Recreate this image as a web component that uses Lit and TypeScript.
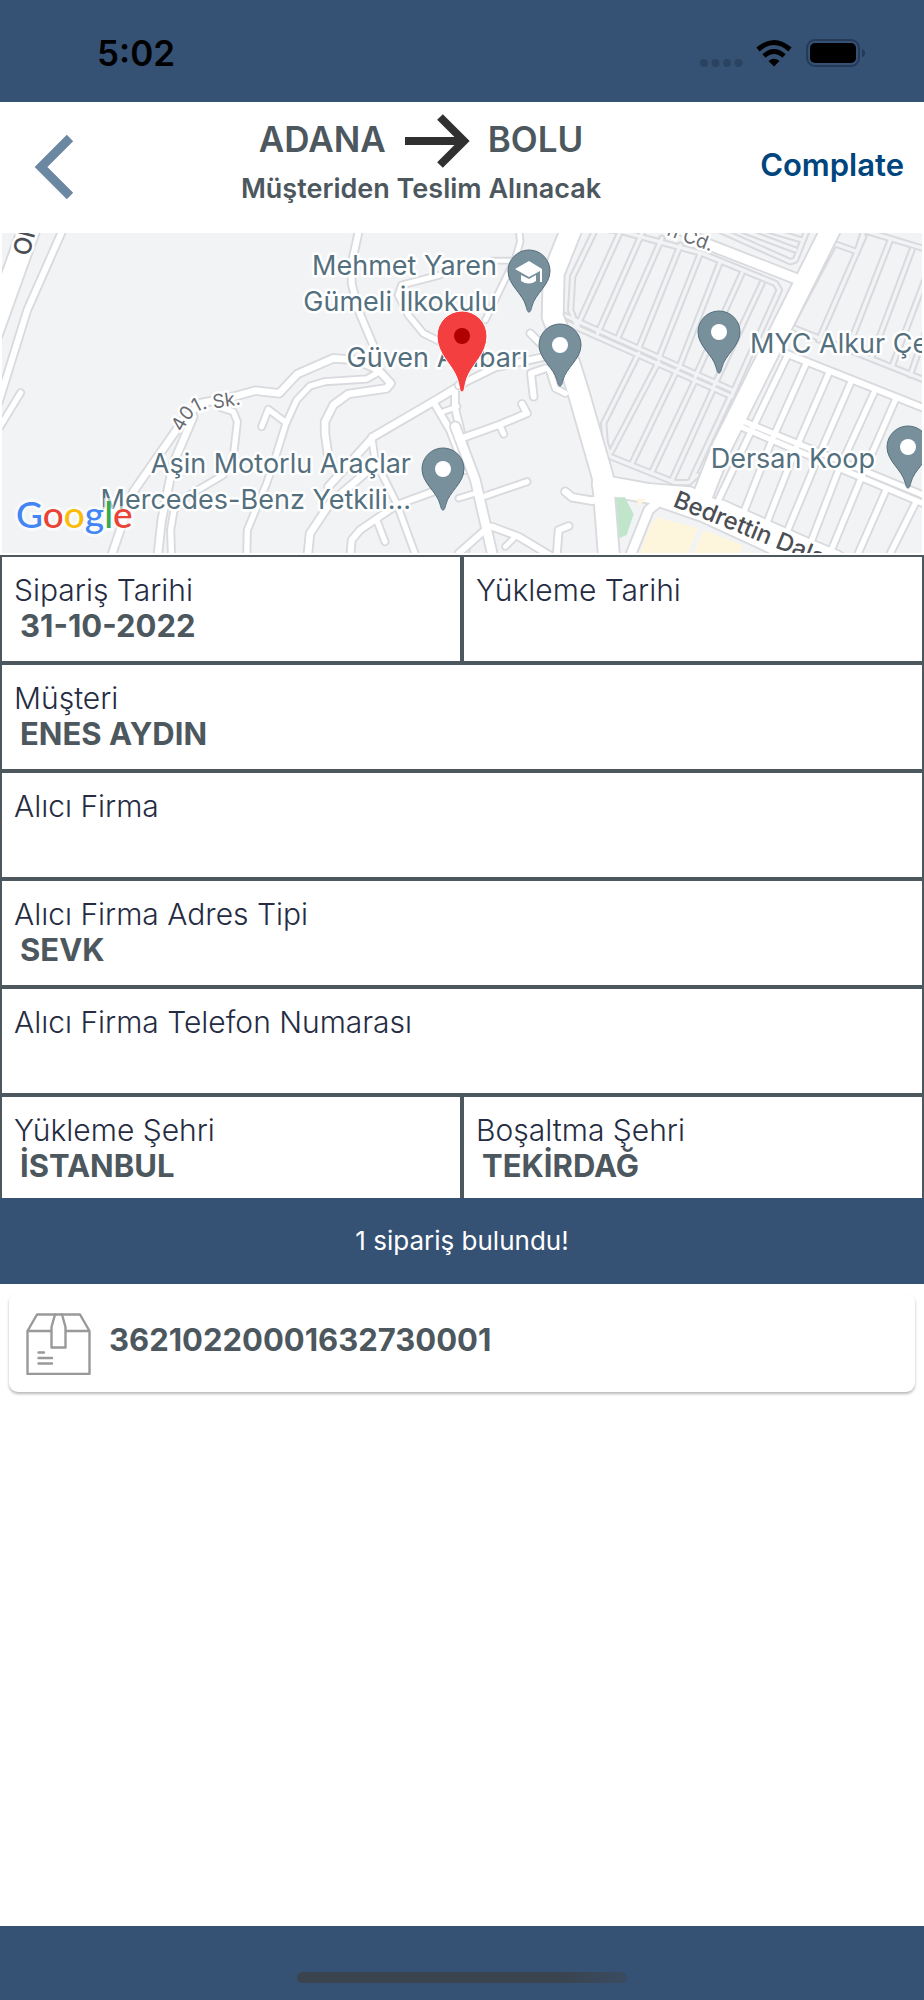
import { LitElement, html, svg, css } from "lit";
import { customElement, property } from "lit/decorators.js";

type Road = [path: string, width: number];

// Street geometry is kept in thirds of a pixel; the east half has its own origin.
const WEST_ROADS: Road[] = [
  ["M90 -10L-25 310", 62],
  ["M190 -5L82 240L-5 520", 18],
  ["M62 488L0 590", 16],
  ["M330 990L400 785L550 570L600 520L700 500L765 482L838 490L892 432L1000 385L1070 390L1135 420L1172 460L1160 475L1045 492L1000 525L975 575V610L985 680", 20],
  ["M1078 -5L1055 100V160L1075 240L1130 370L1130 425", 18],
  ["M472 990L485 870L520 700L580 560", 20],
  ["M660 532L700 545L712 575L700 680L670 735L560 800L522 840L512 900L515 990", 16],
  ["M740 990L742 900L800 760L830 670L858 580L890 510L930 468L975 455L1100 447L1130 430", 16],
  ["M785 590L805 538L858 578", 16],
  ["M922 990L930 910L990 820L1130 700", 20],
  ["M985 770L1120 620L1300 515L1386 463", 20],
  ["M1115 620L1125 690L1190 820L1252 990", 16],
  ["M1300 515L1350 600L1396 720", 18],
  ["M1365 480V535L1396 660", 18],
  ["M1330 545L1372 530", 14],
  ["M1050 990L1055 930L1080 900L1190 825L1300 785", 18],
  ["M1130 870L1155 935", 16],
  ["M1320 135L1205 165L1195 195L1225 255L1270 310L1340 345", 16],
  ["M1370 990L1400 960", 14],
];

const EAST_ROADS: Road[] = [
  ["M170 -5L175 35L160 85L70 270", 14],
  ["M90 92H150", 12],
  ["M-10 466L100 412L250 380", 18],
  ["M205 310L240 345", 18],
  ["M215 500L207 430L250 415", 18],
  ["M262 420L280 475L310 490", 16],
  ["M-10 628L110 585L195 550L180 522", 18],
  ["M115 590L125 612", 16],
  ["M70 798L195 755", 16],
  ["M-10 805L40 790", 14],
  ["M-20 590L40 750L95 990", 26],
  ["M310 785L330 802L390 812L415 808", 20],
  ["M283 990L290 900L320 888", 18],
  ["M90 890L170 920L270 980", 18],
  ["M-10 970L80 890", 18],
  ["M130 950L155 925", 14],
  ["M970 370L1400 540", 18],
  ["M975 380L850 640L760 830", 16],
  ["M1035 395L930 630L840 860", 16],
  ["M1100 430L1000 660L910 890", 16],
  ["M1165 460L1065 690L965 930", 16],
  ["M1235 490L1130 720L1030 980", 16],
  ["M1300 510L1195 750L1100 980", 16],
  ["M1270 785L1180 990", 16],
  ["M1360 820L1270 1000", 16],
  ["M835 570L1400 802", 16],
  ["M835 590L1400 828", 16],
  ["M780 820L1160 990", 18],
  ["M660 0L730 40L1000 145", 28],
  ["M335 -20L275 130L272 260L300 330L350 490L422 740L442 990", 60],
  ["M1115 -20L980 250L860 490L780 650L725 790", 56],
  ["M420 765L560 790L680 800L800 860L1120 990", 56],
  ["M500 990L560 840L590 815L720 860L980 980", 26],
];

const ALLEYS: string[] = [
  "M395 10L332 140L326 240L345 290",
  "M380 -10L480 5L720 70L940 160L952 180L810 495",
  "M475 5L345 290",
  "M540 10L407 310",
  "M600 25L467 325",
  "M655 45L530 355",
  "M715 70L590 385",
  "M775 95L650 415",
  "M840 130L700 440",
  "M900 160L755 470",
  "M305 255L810 480",
  "M305 275L810 500",
  "M530 370L425 580L430 640L445 680L640 758H680L705 735",
  "M590 395L448 665",
  "M645 420L510 700",
  "M700 450L570 725",
  "M755 475L630 750",
  "M805 500L690 745",
  "M750 -10L985 95L1000 90L1040 -10",
  "M800 -15L1000 60",
  "M850 -20L1020 30",
  "M1100 35L1185 65L1210 -10",
  "M1200 0L1400 60",
  "M1115 45L985 290L1400 455",
  "M1205 20L1070 330",
  "M1285 30L1160 350",
  "M1350 60L1230 380",
  "M1400 120L1290 410",
  "M1400 280L1345 435",
];

interface Place {
  lines: [string, number, number][];
  anchor: "start" | "end";
  pin: [number, number];
  school?: boolean;
}

const PLACES: Place[] = [
  { lines: [["Mehmet Yaren", 497, 45], ["Gümeli İlkokulu", 497, 81]], anchor: "end", pin: [529, 82], school: true },
  { lines: [["Güven Ambarı", 528, 137]], anchor: "end", pin: [560, 156] },
  { lines: [["Aşin Motorlu Araçlar", 411, 243], ["Mercedes-Benz Yetkili...", 411, 279]], anchor: "end", pin: [443, 280] },
  { lines: [["MYC Alkur Çelik", 750, 123]], anchor: "start", pin: [719, 143] },
  { lines: [["Dersan Koop", 875, 238]], anchor: "end", pin: [908, 258] },
];

@customElement("route-map")
export class RouteMap extends LitElement {
  static styles = css`
    :host { display: block; background: #f1f3f5; }
    .map { display: block; width: 100%; height: 320px; font-family: Inter, "Noto Sans", sans-serif; }
    .casing, .fill, .alley-casing, .alley-fill { fill: none; stroke-linejoin: round; stroke-linecap: round; }
    .casing { stroke: #d9dade; }
    .fill { stroke: #fff; }
    .alley-casing { stroke: #d9dade; stroke-width: 22px; }
    .alley-fill { stroke: #f1f3f5; stroke-width: 10px; }
    .park { fill: #c1e5cb; }
    .shop { fill: #fdf6dd; }
    .place { font-size: 27px; fill: #54707e; }
    .street { font-size: 19px; fill: #686b70; }
    .avenue { font-size: 24px; font-weight: 500; fill: #4b4e54; }
    .halo { stroke: #fff; stroke-width: 5px; paint-order: stroke; stroke-linejoin: round; }
    .pin { fill: #78909c; stroke: #546e7a; stroke-width: 1px; }
    .dot { fill: #fff; }
    .marker { fill: #f43f40; stroke: #fff; stroke-width: 1px; }
    .marker-dot { fill: #b00000; }
    .logo { font-family: Lato, sans-serif; font-size: 37px; font-weight: 500; }
    .logo-halo { stroke: #fff; stroke-opacity: 0.6; stroke-width: 6px; paint-order: stroke; }
    .blue { fill: #4285f4; }
    .red { fill: #ea4335; }
    .yellow { fill: #fbbc05; }
    .green { fill: #34a853; }
  `;

  private roads(list: Road[]) {
    return svg`
      ${list.map(([d, w]) => svg`<path class="casing" d=${d} stroke-width=${w + 11}></path>`)}
      ${list.map(([d, w]) => svg`<path class="fill" d=${d} stroke-width=${w}></path>`)}`;
  }

  private place(p: Place) {
    const [x, y] = p.pin;
    return svg`
      ${p.lines.map(([t, tx, ty]) => svg`<text class="place halo" x=${tx} y=${ty} text-anchor=${p.anchor}>${t}</text>`)}
      <g transform="translate(${x} ${y})">
        <path class="pin" d="M0 0C-1.500 0 -2 -2 -3 -6C-6 -18 -21 -27 -21 -41A21 21 0 0 1 21 -41C21 -27 6 -18 3 -6C2 -2 1.500 0 0 0Z"></path>
        ${p.school
          ? svg`<path class="dot" d="M0 -51L-14 -43L0 -35L11 -41V-30H13V-43ZM-8 -37V-31Q0 -26 7 -31V-37L0 -33Z"></path>`
          : svg`<circle class="dot" cx="0" cy="-41" r="8"></circle>`}
      </g>`;
  }

  render() {
    return html`
      <svg class="map" viewBox="2 3 920 320" preserveAspectRatio="xMidYMid slice" role="img" aria-label="Harita">
        <g transform="scale(0.33333)">
          ${this.roads(WEST_ROADS)}
          <g transform="translate(1386 0)">
            ${ALLEYS.map((d) => svg`<path class="alley-casing" d=${d}></path>`)}
            ${ALLEYS.map((d) => svg`<path class="alley-fill" d=${d}></path>`)}
            ${this.roads(EAST_ROADS)}
            <path class="shop" d="M585 862L708 895L675 980H530L565 885ZM724 900L842 945L830 980H692ZM522 806H552L532 828ZM858 962L890 980H850Z"></path>
            <path class="park" d="M462 803L488 801L515 852L494 915L472 925Z"></path>
          </g>
        </g>
        <defs>
          <path id="side-street" d="M182 203Q193 178 209 179L245 174"></path>
        </defs>
        <text class="street halo"><textPath href="#side-street">401. Sk.</textPath></text>
        <text class="avenue halo" transform="translate(29 27) rotate(-75)">Ol</text>
        <text class="street halo" transform="translate(666 5) rotate(20)">n Cd.</text>
        <text class="avenue halo" transform="translate(672 276) rotate(22)">Bedrettin Dalan</text>
        ${PLACES.map((p) => this.place(p))}
        <text class="logo logo-halo" x="16" y="298"><tspan class="blue">G</tspan><tspan class="red">o</tspan><tspan class="yellow">o</tspan><tspan class="blue">g</tspan><tspan class="green">l</tspan><tspan class="red">e</tspan></text>
        <path class="marker" d="M462 162C459 162 460 156 457 148C452 134 437 124 437 106A25 25 0 0 1 487 106C487 124 472 134 467 148C464 156 465 162 462 162Z"></path>
        <circle class="marker-dot" cx="462" cy="106" r="8"></circle>
      </svg>
    `;
  }
}

@customElement("order-field")
export class OrderField extends LitElement {
  static styles = css`
    :host { display: block; box-sizing: border-box; min-height: 108px; padding: 15px 12px 0; border: 2px solid #4c575e; }
    .label { font-size: 30px; line-height: 36px; font-weight: 300; color: #252c42; }
    .value { padding-left: 6px; font-size: 31px; line-height: 36px; font-weight: 700; color: #4c575e; }
  `;
  @property() label = "";
  @property() value = "";

  render() {
    return html`<div class="label">${this.label}</div><div class="value">${this.value}</div>`;
  }
}

@customElement("app-root")
export class AppRoot extends LitElement {
  static styles = css`
    :host { display: flex; flex-direction: column; min-height: 100vh; background: #fff; font-family: Inter, "Noto Sans", sans-serif; color: #4c575e; }
    .status { display: flex; align-items: center; justify-content: space-between; box-sizing: border-box; height: 102px; padding: 4px 58px 0 97px; background: #355174; color: #000; }
    .time { font-size: 35px; line-height: 44px; font-weight: 600; }
    .status-icons { display: block; width: 168px; height: 30px; }
    .header { display: flex; align-items: center; box-sizing: border-box; height: 131px; padding-bottom: 2px; }
    .back { flex: none; width: 92px; height: 80px; padding: 0 0 0 34px; border: 0; background: none; cursor: pointer; }
    .back svg { display: block; width: 40px; height: 66px; }
    .heading { flex: 1; display: flex; flex-direction: column; align-items: center; padding-bottom: 12px; }
    .route { display: flex; align-items: center; gap: 18px; margin: 0; font-size: 35px; line-height: 52px; font-weight: 600; }
    .route svg { display: block; width: 66px; height: 56px; }
    .city { padding-bottom: 4px; }
    .stage { margin: 0; font-size: 27px; line-height: 40px; font-weight: 600; }
    .complete { flex: none; width: 174px; padding: 0 20px 4px 0; border: 0; background: none; color: #00457d; font: 600 31px/36px Inter, "Noto Sans", sans-serif; text-align: right; white-space: nowrap; cursor: pointer; }
    .map { margin: 0 2px 2px; }
    .row { display: grid; grid-auto-flow: column; grid-auto-columns: 1fr; }
    .row:last-of-type { height: 103px; }
    .count { display: flex; align-items: center; justify-content: center; height: 86px; background: #355174; color: #fff; font-size: 26px; line-height: 32px; z-index: 1; }
    .orders { flex: 1; margin: 0; padding: 9px 9px; list-style: none; }
    .order { display: flex; align-items: center; gap: 18px; box-sizing: border-box; height: 99px; padding: 0 17px; border-radius: 9px; background: #fff; box-shadow: 0 2px 3px rgba(0, 0, 0, 0.28); font-size: 31px; line-height: 36px; font-weight: 700; }
    .order svg { flex: none; display: block; width: 65px; height: 62px; margin-top: 2px; }
    .code { padding-bottom: 5px; }
    .footer { display: flex; justify-content: center; align-items: flex-end; box-sizing: border-box; height: 74px; padding-bottom: 17px; background: #355174; }
    .home { width: 330px; height: 11px; border-radius: 6px; background: linear-gradient(90deg, #3a444f 80%, #3a4b62); }
  `;

  private rows: [string, string][][] = [
    [["Sipariş Tarihi", "31-10-2022"], ["Yükleme Tarihi", ""]],
    [["Müşteri", "ENES AYDIN"]],
    [["Alıcı Firma", ""]],
    [["Alıcı Firma Adres Tipi", "SEVK"]],
    [["Alıcı Firma Telefon Numarası", ""]],
    [["Yükleme Şehri", "İSTANBUL"], ["Boşaltma Şehri", "TEKİRDAĞ"]],
  ];

  private orders = ["36210220001632730001"];

  render() {
    return html`
      <div class="status">
        <span class="time">5:02</span>
        <svg class="status-icons" viewBox="0 0 168 30" aria-hidden="true">
          <g fill="#2a4361">
            <circle cx="6" cy="25" r="4"></circle><circle cx="17.500" cy="25" r="4"></circle>
            <circle cx="29" cy="25" r="4"></circle><circle cx="40.500" cy="25" r="4"></circle>
          </g>
          <g fill="none" stroke="#000" stroke-width="5">
            <path d="M60 11.500Q76 -2.500 92 11.500"></path>
            <path d="M66 18Q76 9 86 18"></path>
          </g>
          <path d="M70.500 23Q76 18.500 81.500 23L76 28.500Z"></path>
          <rect x="109" y="2" width="52" height="26" rx="8" fill="none" stroke="#243a56" stroke-width="2"></rect>
          <rect x="112" y="5" width="46" height="20" rx="5"></rect>
          <path d="M164 11Q167 12 167 15T164 19Z" fill="#243a56"></path>
        </svg>
      </div>
      <header class="header">
        <button class="back" aria-label="Geri">
          <svg viewBox="0 0 40 66"><path d="M36 4L7 33L36 62" fill="none" stroke="#6b88a3" stroke-width="9"></path></svg>
        </button>
        <div class="heading">
          <h1 class="route">
            <span class="city">ADANA</span>
            <svg viewBox="0 0 66 56" aria-hidden="true"><path d="M1 28H60M36 4L60 28L36 52" fill="none" stroke="#303030" stroke-width="8"></path></svg>
            <span class="city">BOLU</span>
          </h1>
          <p class="stage">Müşteriden Teslim Alınacak</p>
        </div>
        <button class="complete">Complate</button>
      </header>
      <route-map class="map"></route-map>
      ${this.rows.map((row) => html`
        <section class="row">
          ${row.map(([label, value]) => html`<order-field .label=${label} .value=${value}></order-field>`)}
        </section>`)}
      <div class="count">1 sipariş bulundu!</div>
      <ul class="orders">
        ${this.orders.map((code) => html`
          <li class="order">
            <svg viewBox="0 0 65 62" aria-hidden="true">
              <g fill="none" stroke="#999" stroke-width="2.400" stroke-linejoin="round" stroke-linecap="round">
                <path d="M1.500 18V61H63.500V18L54 1.500H11L1.500 18H25M40 18H63.500"></path>
                <path d="M29 1.500L25.500 14V34.500H39.500V14L36 1.500"></path>
                <path d="M12.500 39.500H18M12.500 45H26M12.500 50.500H26"></path>
              </g>
            </svg>
            <span class="code">${code}</span>
          </li>`)}
      </ul>
      <footer class="footer"><div class="home"></div></footer>
    `;
  }
}
